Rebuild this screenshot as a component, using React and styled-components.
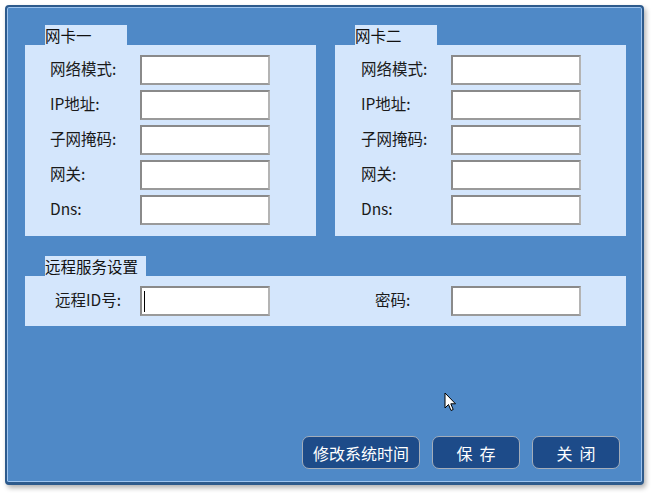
import styled, { createGlobalStyle } from 'styled-components'

const GlobalStyle = createGlobalStyle`
  html, body {
    margin: 0;
    padding: 0;
    background: #ffffff;
  }
  body {
    font-family: "Noto Sans CJK SC", "Liberation Sans", sans-serif;
  }
`

const Page = styled.div`
  width: 654px;
  height: 494px;
  padding: 5px 0 0 5px;
  box-sizing: border-box;
  position: relative;
`

const Frame = styled.div`
  width: 639px;
  height: 480px;
  box-sizing: border-box;
  background: #4f89c7;
  border: 2px solid #2d5a8c;
  border-bottom-width: 3px;
  border-radius: 4px;
  box-shadow: inset 0 0 0 1px #9ec4ee, 2px 3px 5px rgba(0, 0, 0, 0.3);
  padding: 18px 16px 13px 18px;
  display: flex;
  flex-direction: column;
`

const CardRow = styled.div`
  display: flex;
  gap: 19px;
`

const Group = styled.div`
  display: flex;
  flex-direction: column;
  width: ${p => p.$width}px;
  margin-top: ${p => p.$top || 0}px;
`

const Tab = styled.div`
  align-self: flex-start;
  margin-left: 20px;
  min-width: ${p => p.$width}px;
  height: 20px;
  background: #d4e6fc;
  color: #111;
  font-size: 15.5px;
  line-height: 20px;
  white-space: nowrap;
  padding-right: 2px;
`

const Panel = styled.div`
  background: #d4e6fc;
  padding: ${p => p.$pad};
`

const FieldGrid = styled.div`
  display: grid;
  grid-template-columns: 90px 130px;
  row-gap: 5px;
`

const RemoteGrid = styled.div`
  display: grid;
  grid-template-columns: 85px 130px 181px 130px;
  align-items: center;
`

const Label = styled.div`
  height: 30px;
  line-height: 26px;
  font-size: 15.5px;
  color: #1a1a1a;
  white-space: nowrap;
  padding-left: ${p => p.$indent || 0}px;
`

const TextBox = styled.div`
  position: relative;
  width: 130px;
  height: 30px;
  box-sizing: border-box;
  background: #fff;
  border: 2px solid #8a8a8a;
  border-right-color: #b4b4b4;
  border-bottom-color: #9a9a9a;
`

const Caret = styled.span`
  position: absolute;
  left: 2px;
  top: 3px;
  width: 1px;
  height: 21px;
  background: #000;
`

const Spacer = styled.div`
  flex: 1;
`

const ButtonRow = styled.div`
  display: flex;
  justify-content: flex-end;
  gap: 12px;
  padding-right: 6px;
`

const Button = styled.button`
  width: ${p => p.$width}px;
  height: 33px;
  background: #1d4b89;
  border: 1px solid #a3adba;
  border-radius: 7px;
  color: #fff;
  font-family: "Noto Sans CJK SC", "Liberation Sans", sans-serif;
  font-size: 16px;
  padding: 0;
  white-space: pre;
  cursor: pointer;
`

const Pointer = styled.svg`
  position: absolute;
  left: 444px;
  top: 392px;
`

const nicFields = ['网络模式:', 'IP地址:', '子网掩码:', '网关:', 'Dns:']

const NicGroup = ({ title, inset }) => (
  <Group $width={291}>
    <Tab $width={80}>{title}</Tab>
    <Panel $pad={`10px 0 11px ${inset}px`}>
      <FieldGrid>
        {nicFields.map(f => [
          <Label key={f}>{f}</Label>,
          <TextBox key={f + '-box'} />
        ])}
      </FieldGrid>
    </Panel>
  </Group>
)

export default function App() {
  return (
    <Page>
      <GlobalStyle />
      <Frame>
        <CardRow>
          <NicGroup title="网卡一" inset={25} />
          <NicGroup title="网卡二" inset={26} />
        </CardRow>
        <Group $width={601} $top={20}>
          <Tab $width={99}>远程服务设置</Tab>
          <Panel $pad="10px 0 10px 30px">
            <RemoteGrid>
              <Label>远程ID号:</Label>
              <TextBox><Caret /></TextBox>
              <Label $indent={105}>密码:</Label>
              <TextBox />
            </RemoteGrid>
          </Panel>
        </Group>
        <Spacer />
        <ButtonRow>
          <Button $width={118}>修改系统时间</Button>
          <Button $width={88}>{'保  存'}</Button>
          <Button $width={88}>{'关  闭'}</Button>
        </ButtonRow>
      </Frame>
      <Pointer width="13" height="21" viewBox="0 0 13 21">
        <path d="M1 1 L1 16 L4.5 12.5 L7 18.5 L9.2 17.5 L6.8 11.8 L11.5 11.8 Z" fill="#fff" stroke="#000" strokeWidth="1" strokeLinejoin="round" />
      </Pointer>
    </Page>
  )
}
